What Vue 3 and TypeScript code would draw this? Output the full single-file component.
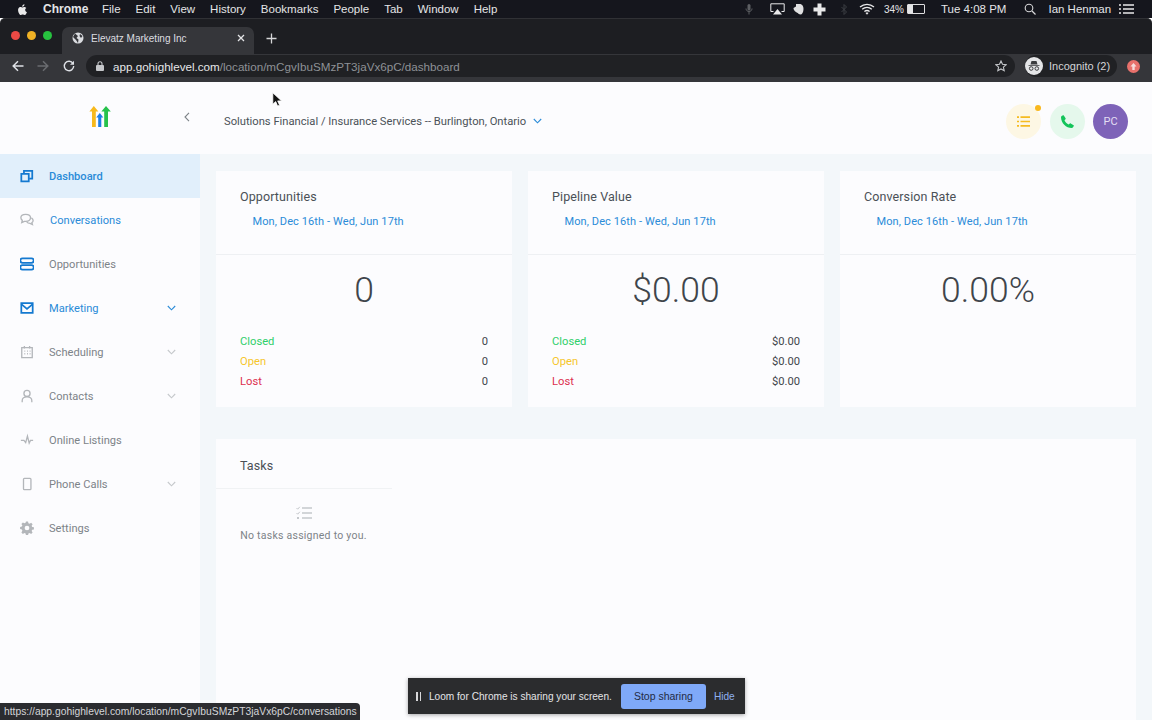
<script setup lang="ts">
interface NavItem { label: string; cls: string; iconCls: string; paths: string[]; chevron?: string; indent?: boolean }
const menus = ['File', 'Edit', 'View', 'History', 'Bookmarks', 'People', 'Tab', 'Window', 'Help']
const nav: NavItem[] = [
  { label: 'Dashboard', cls: 'active', iconCls: 'blue', paths: ['M1.500 5.500h8.500v8.500H1.500z', 'M4.500 5V2h9.500v9H10.500'] },
  { label: 'Conversations', cls: 'link', iconCls: 'grey', indent: true, paths: ['M1 5.500C1 3 3.500 1.500 6.500 1.500S12 3 12 5.500 9.500 9.500 6.500 9.500H5L2 11l.6-2.600C1.500 7.600 1 6.600 1 5.500z', 'M13 5.500c1.200.7 2 1.800 2 3 0 1-.5 1.900-1.400 2.500l.6 2.200-2.700-1.300c-1.600 0-3-.5-3.800-1.400'] },
  { label: 'Opportunities', cls: '', iconCls: 'blue', paths: ['M3 1.500h10a1.600 1.600 0 0 1 0 5.200H3a1.600 1.600 0 0 1 0-5.200z', 'M3 9.300h10a1.600 1.600 0 0 1 0 5.200H3a1.600 1.600 0 0 1 0-5.200z'] },
  { label: 'Marketing', cls: 'link', iconCls: 'blue', chevron: 'chev-blue', paths: ['M1.500 2.500h13v11h-13z', 'M1.500 3.500 8 9l6.500-5.500'] },
  { label: 'Scheduling', cls: '', iconCls: 'grey', chevron: '', paths: ['M2 3h12v11.500H2z', 'M5 1v3M11 1v3M5 7h1M8 7h1M11 7h1M5 10h1M8 10h1M11 10h1'] },
  { label: 'Contacts', cls: '', iconCls: 'grey', chevron: '', paths: ['M8 1.500a3.500 3.500 0 1 1 0 7 3.500 3.500 0 0 1 0-7z', 'M2.500 15v-1.500c0-2.500 2-4.500 5.500-4.500s5.500 2 5.500 4.500V15'] },
  { label: 'Online Listings', cls: '', iconCls: 'grey', paths: ['M1 8.500h3.500L6.500 11 8.500 3.500l2 8 1.500-3H15'] },
  { label: 'Phone Calls', cls: '', iconCls: 'grey', chevron: '', paths: ['M5 1.500h6.500a1 1 0 0 1 1 1v11a1 1 0 0 1-1 1H5a1 1 0 0 1-1-1v-11a1 1 0 0 1 1-1z'] },
  { label: 'Settings', cls: '', iconCls: 'gear', paths: ['M6.800.5h2.400l.4 2 1.400.6 1.700-1.100 1.700 1.700-1.100 1.700.6 1.400 2 .4v2.400l-2 .4-.6 1.400 1.100 1.700-1.700 1.700-1.700-1.100-1.400.6-.4 2H6.800l-.4-2-1.400-.6-1.700 1.100-1.700-1.700L2.700 11 2.100 9.600l-2-.4V6.800l2-.4.6-1.400L1.600 3.300 3.300 1.600 5 2.700l1.400-.6zM8 5.300a2.700 2.700 0 1 0 0 5.400 2.700 2.700 0 0 0 0-5.400z'] },
]
const cards = [
  { title: 'Opportunities', value: '0', rows: ['0', '0', '0'] },
  { title: 'Pipeline Value', value: '$0.00', rows: ['$0.00', '$0.00', '$0.00'] },
  { title: 'Conversion Rate', value: '0.00%', rows: [] as string[] },
]
const rowNames = [
  { name: 'Closed', cls: 'closed' },
  { name: 'Open', cls: 'open' },
  { name: 'Lost', cls: 'lost' },
]
</script>

<template>
  <div class="screen">
    <div class="macbar">
      <svg class="apple" viewBox="0 0 14 16" width="11" height="13"><path fill="#e9e9ea" d="M10.400 8.500c0-1.600 1.300-2.300 1.400-2.400-.8-1.100-2-1.300-2.400-1.300-1-.1-2 .6-2.500.6s-1.300-.6-2.200-.6c-1.100 0-2.200.7-2.800 1.700-1.200 2-.3 5.100.9 6.800.6.800 1.300 1.800 2.200 1.700.9 0 1.200-.5 2.300-.5s1.400.5 2.300.5 1.500-.8 2.100-1.700c.7-1 .9-1.900 1-2-.1 0-2.300-.8-2.300-2.800zM8.800 3.600c.5-.6.800-1.400.7-2.300-.7 0-1.600.5-2.100 1.100-.5.500-.9 1.400-.8 2.200.8.100 1.600-.4 2.200-1z"/></svg>
      <b class="appname">Chrome</b>
      <span v-for="m in menus" :key="m" class="menu">{{ m }}</span>
      <div class="status">
        <svg width="8" height="12" viewBox="0 0 8 12"><rect x="2.500" y="1" width="3" height="6.500" rx="1.500" fill="#5d5f63"/><path d="M1 5.500c0 4 6 4 6 0M4 9v2.500" stroke="#5d5f63" fill="none"/></svg>
        <svg class="st-air" width="15" height="12" viewBox="0 0 15 12"><path d="M3.500 8.500H.8V.8h13.400v7.700h-2.700" fill="none" stroke="#e9e9ea"/><path d="M7.500 6 12 11.500H3z" fill="#e9e9ea"/></svg>
        <svg class="st-el" width="11" height="12" viewBox="0 0 11 12"><path d="M3 1h4.500c2 .5 3 2.500 3 5 0 3.500-1.500 5.500-3 5.500-1.500 0-2.200-1-2.700-1.500C3 9.500.5 7.500.5 5L3 3.500z" fill="#e0e0e1"/></svg>
        <svg class="st-plus" width="13" height="13" viewBox="0 0 13 13"><path d="M4.500.5h4v4h4v4h-4v4h-4v-4h-4v-4h4z" fill="#e9e9ea"/></svg>
        <svg class="st-bt" width="6" height="11" viewBox="0 0 6 11"><path d="M.5 3l5 5-2.500 2.500V.5L5.500 3l-5 5" fill="none" stroke="#3c3f44"/></svg>
        <svg class="st-wifi" width="16" height="12" viewBox="0 0 16 12"><path d="M1 4c4-3.600 10-3.600 14 0M3.200 6.300c2.800-2.400 6.800-2.400 9.600 0M5.400 8.500c1.500-1.200 3.700-1.200 5.200 0" fill="none" stroke="#e9e9ea" stroke-width="1.300"/><path d="M8 11.800 6.500 10c.9-.6 2.100-.6 3 0z" fill="#e9e9ea"/></svg>
        <span class="st-pct">34%</span>
        <span class="battery"><i></i></span>
        <span class="st-time">Tue 4:08 PM</span>
        <svg class="st-search" width="12" height="12" viewBox="0 0 12 12"><circle cx="5" cy="5" r="3.800" fill="none" stroke="#d8d8da" stroke-width="1.100"/><path d="m8 8 3.500 3.500" stroke="#d8d8da" stroke-width="1.200"/></svg>
        <span class="st-user">Ian Henman</span>
        <svg class="st-list" width="15" height="10" viewBox="0 0 15 10"><path d="M0 1h2M4 1h11M0 5h2M4 5h11M0 9h2M4 9h11" stroke="#e9e9ea" stroke-width="1.300"/></svg>
      </div>
    </div>

    <div class="tabstrip">
      <div class="lights"><i class="r"></i><i class="y"></i><i class="g"></i></div>
      <div class="tab">
        <svg width="12" height="12" viewBox="0 0 12 12"><circle cx="6" cy="6" r="5.500" fill="#dadce0"/><path d="M3 1.500 6 4 4.500 6l2 1.500L6 11 4 8 1 5zM8 2l2.500 2L9 6 7.500 4z" fill="#35363a"/></svg>
        <span class="tab-title">Elevatz Marketing Inc</span>
        <svg class="tab-x" width="8" height="8" viewBox="0 0 8 8"><path d="m1 1 6 6M7 1 1 7" stroke="#e4e5e7" stroke-width="1.300"/></svg>
      </div>
      <svg class="newtab" width="11" height="11" viewBox="0 0 11 11"><path d="M5.500.5v10M.5 5.500h10" stroke="#d5d6d8" stroke-width="1.300"/></svg>
    </div>

    <div class="toolbar">
      <svg width="12" height="12" viewBox="0 0 12 12"><path d="M11.500 6H1.500M6 1.200 1.200 6 6 10.800" fill="none" stroke="#dee1e6" stroke-width="1.500"/></svg>
      <svg class="fwd" width="12" height="12" viewBox="0 0 12 12"><path d="M.5 6h10M6 1.200 10.800 6 6 10.800" fill="none" stroke="#6a6c70" stroke-width="1.500"/></svg>
      <svg class="reload" width="12" height="12" viewBox="0 0 12 12"><path d="M10 3.500A4.700 4.700 0 1 0 10.700 6" fill="none" stroke="#dee1e6" stroke-width="1.400"/><path d="M11 .8v4H7z" fill="#dee1e6"/></svg>
      <div class="omnibox">
        <svg width="8" height="10" viewBox="0 0 8 10"><rect y="4" width="8" height="6" rx="1" fill="#c5c7ca"/><path d="M2 4.500V2.800a2 2 0 0 1 4 0v1.700" fill="none" stroke="#c5c7ca" stroke-width="1.100"/></svg>
        <span class="url"><span class="host">app.gohighlevel.com</span>/location/mCgvIbuSMzPT3jaVx6pC/dashboard</span>
        <svg class="star" width="12" height="12" viewBox="0 0 12 12"><path d="m6 1 1.500 3.300 3.700.4-2.800 2.400.8 3.600L6 8.900l-3.200 1.800.8-3.600L.8 4.700l3.700-.4z" fill="none" stroke="#c4c6c9" stroke-width="1.100"/></svg>
      </div>
      <div class="incognito">
        <svg width="18" height="18" viewBox="0 0 18 18"><circle cx="9" cy="9" r="9" fill="#e4e5e7"/><path d="M5.500 7.500 6.500 4h5l1 3.500zM3.500 8h11v.8h-11z" fill="#3a3b3e"/><circle cx="6.200" cy="11.500" r="1.800" fill="none" stroke="#3a3b3e"/><circle cx="11.800" cy="11.500" r="1.800" fill="none" stroke="#3a3b3e"/></svg>
        <span>Incognito (2)</span>
      </div>
      <svg class="update" width="13" height="13" viewBox="0 0 13 13"><circle cx="6.500" cy="6.500" r="6.500" fill="#e8716c"/><path d="M6.500 3 3.500 6.500h1.800V10h2.400V6.500h1.800z" fill="#f7dcdb"/></svg>
    </div>

    <div class="app">
      <aside class="sidebar">
        <div class="brand">
          <svg class="logo" width="22" height="21" viewBox="0 0 22 21">
            <path d="M4.800 0 9.400 5.500H6.800V21H3V5.500H.4z" fill="#f7b91d"/>
            <path d="M17 0l4.800 5.500h-2.800V21h-3.800V5.500h-2.800z" fill="#27c24c"/>
            <path d="M10.800 7l3.500 4.500h-2V21H9.200v-9.500h-2z" fill="#1c7de6"/>
          </svg>
          <svg class="collapse" width="6" height="10" viewBox="0 0 6 10"><path d="M5 .8 1 5l4 4.200" fill="none" stroke="#7c8287" stroke-width="1.100"/></svg>
        </div>
        <nav class="nav">
          <a v-for="item in nav" :key="item.label" class="nav-item" :class="item.cls">
            <svg class="nav-icon" :class="item.iconCls" width="14" height="14" viewBox="0 0 16 16">
              <path v-for="(d, i) in item.paths" :key="i" :d="d" />
            </svg>
            <span class="nav-label" :class="{ indent: item.indent }">{{ item.label }}</span>
            <svg v-if="item.chevron !== undefined" class="chev" :class="item.chevron" width="9" height="6" viewBox="0 0 9 6"><path d="m.8 1 3.700 3.800L8.200 1" fill="none" stroke-width="1.100"/></svg>
          </a>
        </nav>
      </aside>

      <div class="main">
        <header class="topbar">
          <span class="company">Solutions Financial / Insurance Services -- Burlington, Ontario</span>
          <svg class="company-chev" width="9" height="6" viewBox="0 0 9 6"><path d="m.8 1 3.700 3.800L8.200 1" fill="none" stroke="#2a8bd8" stroke-width="1.100"/></svg>
          <div class="actions">
            <div class="round tasks-btn">
              <svg width="13" height="11" viewBox="0 0 13 11"><path d="M0 1.200h2M3.500 1.200H13M0 5.500h2M3.500 5.500H13M0 9.800h2M3.500 9.800H13" stroke="#f5bb20" stroke-width="1.700"/></svg>
              <i class="dot"></i>
            </div>
            <div class="round phone-btn">
              <svg width="13" height="13" viewBox="0 0 13 13"><path d="M2.800.4 4.600 3.300c.2.300.1.600-.1.900L3.500 5.300c.6 1.800 2.400 3.600 4.200 4.200l1.100-1c.3-.2.600-.3.900-.1l2.900 1.800c.3.200.3.500.2.800l-.8 1.300c-.3.400-.7.700-1.200.7C5.100 13 0 7.900 0 2.200 0 1.700.3 1.300.7 1L2 .2c.3-.1.600-.1.800.2z" fill="#14c45a"/></svg>
            </div>
            <div class="round avatar">PC</div>
          </div>
        </header>

        <div class="content">
          <div class="cards">
            <section v-for="c in cards" :key="c.title" class="card">
              <div class="card-head">
                <h3>{{ c.title }}</h3>
                <p class="range">Mon, Dec 16th - Wed, Jun 17th</p>
              </div>
              <div class="card-body">
                <div class="big">{{ c.value }}</div>
                <div v-if="c.rows.length" class="rows">
                  <div v-for="(r, i) in c.rows" :key="i" class="row">
                    <span :class="rowNames[i].cls">{{ rowNames[i].name }}</span>
                    <span class="row-val">{{ r }}</span>
                  </div>
                </div>
              </div>
            </section>
          </div>

          <section class="tasks">
            <div class="tasks-head"><h3>Tasks</h3></div>
            <div class="tasks-empty">
              <svg width="16" height="14" viewBox="0 0 16 14"><path d="M6 2h10M6 7h10M6 12h10" stroke="#c4c7cb" stroke-width="1.500"/><path d="m.5 2 1.200 1.200L3.800.8M.5 7l1.200 1.200 2.100-2.400" fill="none" stroke="#c4c7cb"/><rect x="1" y="11" width="2" height="2" fill="#c4c7cb"/></svg>
              <p>No tasks assigned to you.</p>
            </div>
          </section>
        </div>
      </div>

      <div class="statusbubble">https://app.gohighlevel.com/location/mCgvIbuSMzPT3jaVx6pC/conversations</div>
      <div class="loom">
        <span class="pause"><i></i><i></i></span>
        <span class="loom-text">Loom for Chrome is sharing your screen.</span>
        <button class="stop">Stop sharing</button>
        <span class="hide">Hide</span>
      </div>
      <svg class="cursor" width="11" height="15" viewBox="0 0 11 15"><path d="M.8.800v11.500l2.900-2.700 1.900 4.500 2-.9-1.900-4.300h3.900z" fill="#111" stroke="#fff" stroke-width=".8"/></svg>
    </div>
  </div>
</template>

<style scoped>
.screen { width: 1152px; height: 720px; overflow: hidden; display: flex; flex-direction: column; font-family: Roboto, "Liberation Sans", sans-serif; font-variant-ligatures: none; }
.macbar { height: 18px; flex: none; background: #15161d; color: #e4e5e7; display: flex; align-items: center; padding: 0 0 0 17px; box-sizing: border-box; font: 11.500px/17px "Liberation Sans", Arial, sans-serif; }
.apple { margin-right: 15px; }
.appname { font-size: 12px; margin-right: 15px; width: 0; flex: 0 0 44px; }
.menu { margin-right: 15px; }
.status { margin-left: auto; display: flex; align-items: center; width: 407px; flex: none; }
.st-air { margin-left: 17px; }
.st-el { margin-left: 8px; }
.st-plus { margin-left: 9px; }
.st-bt { margin-left: 15px; }
.st-wifi { margin-left: 12px; }
.st-pct { margin-left: 9px; font-size: 10px; }
.battery { margin-left: 3px; width: 16px; height: 8px; border: 1px solid #dedee0; border-radius: 1px; display: block; }
.battery i { display: block; width: 5px; height: 8px; background: #e4e5e7; }
.st-time { margin-left: 16px; font-size: 11.500px; white-space: nowrap; }
.st-search { margin-left: 18px; }
.st-user { margin-left: 12px; white-space: nowrap; font-size: 11.500px; }
.st-list { margin-left: 8px; }
.tabstrip { height: 36px; flex: none; background: #1d1e22; display: flex; align-items: flex-end; border-top: 1px solid #303135; border-radius: 5px 5px 0 0; box-sizing: border-box; }
.lights { display: flex; gap: 7px; padding: 0 0 14px 10.500px; width: 54px; box-sizing: border-box; flex: none; }
.lights i { display: block; width: 9px; height: 9px; border-radius: 50%; }
.lights .r { background: #ec4a45; }
.lights .y { background: #f0b225; }
.lights .g { background: #27c23f; }
.tab { width: 192px; margin-left: 8px; height: 27px; flex: none; background: #35363a; border-radius: 7px 7px 0 0; display: flex; align-items: center; padding: 0 9px 5px 10px; box-sizing: border-box; color: #dcdde0; font: 10px "Liberation Sans", Arial, sans-serif; }
.tab-title { margin-left: 7px; flex: 1; }
.newtab { margin: 0 0 10px 12px; }
.toolbar { height: 28px; flex: none; background: #35363a; display: flex; align-items: center; padding: 0 0 4px 12px; box-sizing: border-box; }
.fwd { margin-left: 13px; }
.reload { margin-left: 14px; }
.omnibox { margin-left: 11px; width: 929px; height: 22px; flex: none; background: #202124; border-radius: 11px; display: flex; align-items: center; padding: 0 8px 0 10px; box-sizing: border-box; font: 11.650px "Liberation Sans", Arial, sans-serif; color: #8e9196; }
.url { margin-left: 9px; flex: 1; white-space: nowrap; }
.host { color: #e6e7e9; }
.incognito { margin-left: 10px; height: 22px; width: 92px; flex: none; background: #202124; border-radius: 11px; display: flex; align-items: center; color: #d4d5d8; font: 11px "Liberation Sans", Arial, sans-serif; gap: 6px; }
.update { margin-left: 9.500px; }
.app { flex: 1; min-height: 0; display: flex; position: relative; background: #f3f7fa; }
.sidebar { width: 200px; flex: none; background: #fcfcfe; }
.brand { height: 72px; position: relative; display: flex; justify-content: center; padding-top: 24px; box-sizing: border-box; }
.logo { display: block; }
.collapse { position: absolute; left: 184px; top: 30px; }
.nav-item { height: 44px; display: flex; align-items: center; padding: 0 24px 0 20px; color: #7c8388; font-size: 11.100px; box-sizing: border-box; }
.nav-item.active { background: #e1effb; color: #2a8bd8; font-weight: 500; }
.nav-item.link { color: #2a8bd8; }
.nav-icon { flex: none; fill: none; stroke-width: 1.700; }
.nav-icon.blue { stroke: #1479d0; stroke-width: 2; }
.nav-icon.grey { stroke: #b3b6ba; stroke-width: 1.500; }
.nav-icon.gear { fill: #b3b6ba; fill-rule: evenodd; }
.nav-label { margin-left: 15px; flex: 1; }
.nav-label.indent { margin-left: 16px; }
.chev { stroke: #c5c8cb; }
.chev-blue { stroke: #2a8bd8; }
.main { flex: 1; min-width: 0; display: flex; flex-direction: column; }
.topbar { height: 72px; flex: none; background: #fcfcfe; display: flex; align-items: center; padding: 6px 24px 0; box-sizing: border-box; }
.company { font-size: 11.200px; color: #4b5258; }
.company-chev { margin-left: 7px; }
.actions { margin-left: auto; display: flex; gap: 8px; margin-right: 0; }
.round { width: 35px; height: 35px; border-radius: 50%; display: flex; align-items: center; justify-content: center; position: relative; }
.tasks-btn { background: #fdf7e4; margin-left: -1px; margin-right: 1px; }
.dot { position: absolute; top: 1px; right: 0; width: 6px; height: 6px; border-radius: 50%; background: #f9b81e; }
.phone-btn { background: #e5f8ec; }
.avatar { background: #7e63b8; color: #e4def3; font-size: 11px; }
.content { flex: 1; min-height: 0; padding: 17px 16px 0; display: flex; flex-direction: column; gap: 32px; }
.cards { display: flex; gap: 16px; }
.card { flex: 1; height: 236px; background: #fcfcfe; display: flex; flex-direction: column; }
.card-head { height: 84px; flex: none; padding: 18px 24px 0; box-sizing: border-box; border-bottom: 1px solid #eef0f3; }
h3 { margin: 0; font-weight: 400; font-size: 12.500px; line-height: 15px; color: #4a5056; letter-spacing: .1px; }
.range { margin: 11px 0 0 12.500px; font-size: 11px; line-height: 14px; color: #2a8bd8; letter-spacing: .1px; }
.card-body { padding: 0 24px; }
.big { text-align: center; font-weight: 300; font-size: 35.500px; line-height: 40px; color: #3f454b; margin-top: 15px; }
.rows { margin-top: 22px; }
.row { display: flex; justify-content: space-between; font-size: 11.200px; line-height: 20px; }
.row-val { color: #3f454b; }
.closed { color: #2fcf6a; }
.open { color: #f6c62c; }
.lost { color: #dc2f4f; }
.tasks { flex: 1; background: #fcfcfe; min-height: 0; }
.tasks-head { width: 176px; height: 50px; padding: 19px 24px 0; box-sizing: border-box; border-bottom: 1px solid #f0f2f4; }
.tasks-head h3 { font-size: 12.500px; }
.tasks-empty { width: 127px; margin-left: 24px; display: flex; flex-direction: column; align-items: center; padding-top: 17px; }
.tasks-empty p { margin: 9px 0 0; font-size: 10.500px; line-height: 14px; white-space: nowrap; color: #7c8388; letter-spacing: .25px; }
.statusbubble { position: absolute; left: 0; bottom: 0; height: 17px; width: 360px; box-sizing: border-box; padding-left: 4px; background: #2b2c30; color: #d4d5d8; border-radius: 0 4px 0 0; font: 10.300px/17px "Liberation Sans", Arial, sans-serif; white-space: nowrap; }
.loom { position: absolute; left: 408px; top: 596px; width: 337px; height: 36px; background: #2b2c2e; box-shadow: 0 1px 4px rgba(0,0,0,.35); display: flex; align-items: center; padding-left: 8px; box-sizing: border-box; color: #e4e5e7; font: 10.100px "Liberation Sans", Arial, sans-serif; }
.pause { display: flex; gap: 2px; }
.pause i { display: block; width: 1.500px; height: 9px; background: #d8d8da; }
.loom-text { margin-left: 8px; white-space: nowrap; }
.stop { margin-left: 9px; width: 85px; height: 25px; border: 0; border-radius: 3px; background: #7fa9f8; color: #1f2b44; font: 500 10.500px "Liberation Sans", Arial, sans-serif; padding: 0; }
.hide { margin-left: 8px; color: #8fb0ef; font-size: 10.100px; }
.cursor { position: absolute; left: 272px; top: 10px; }
</style>

<style>
body { margin: 0; }
</style>
